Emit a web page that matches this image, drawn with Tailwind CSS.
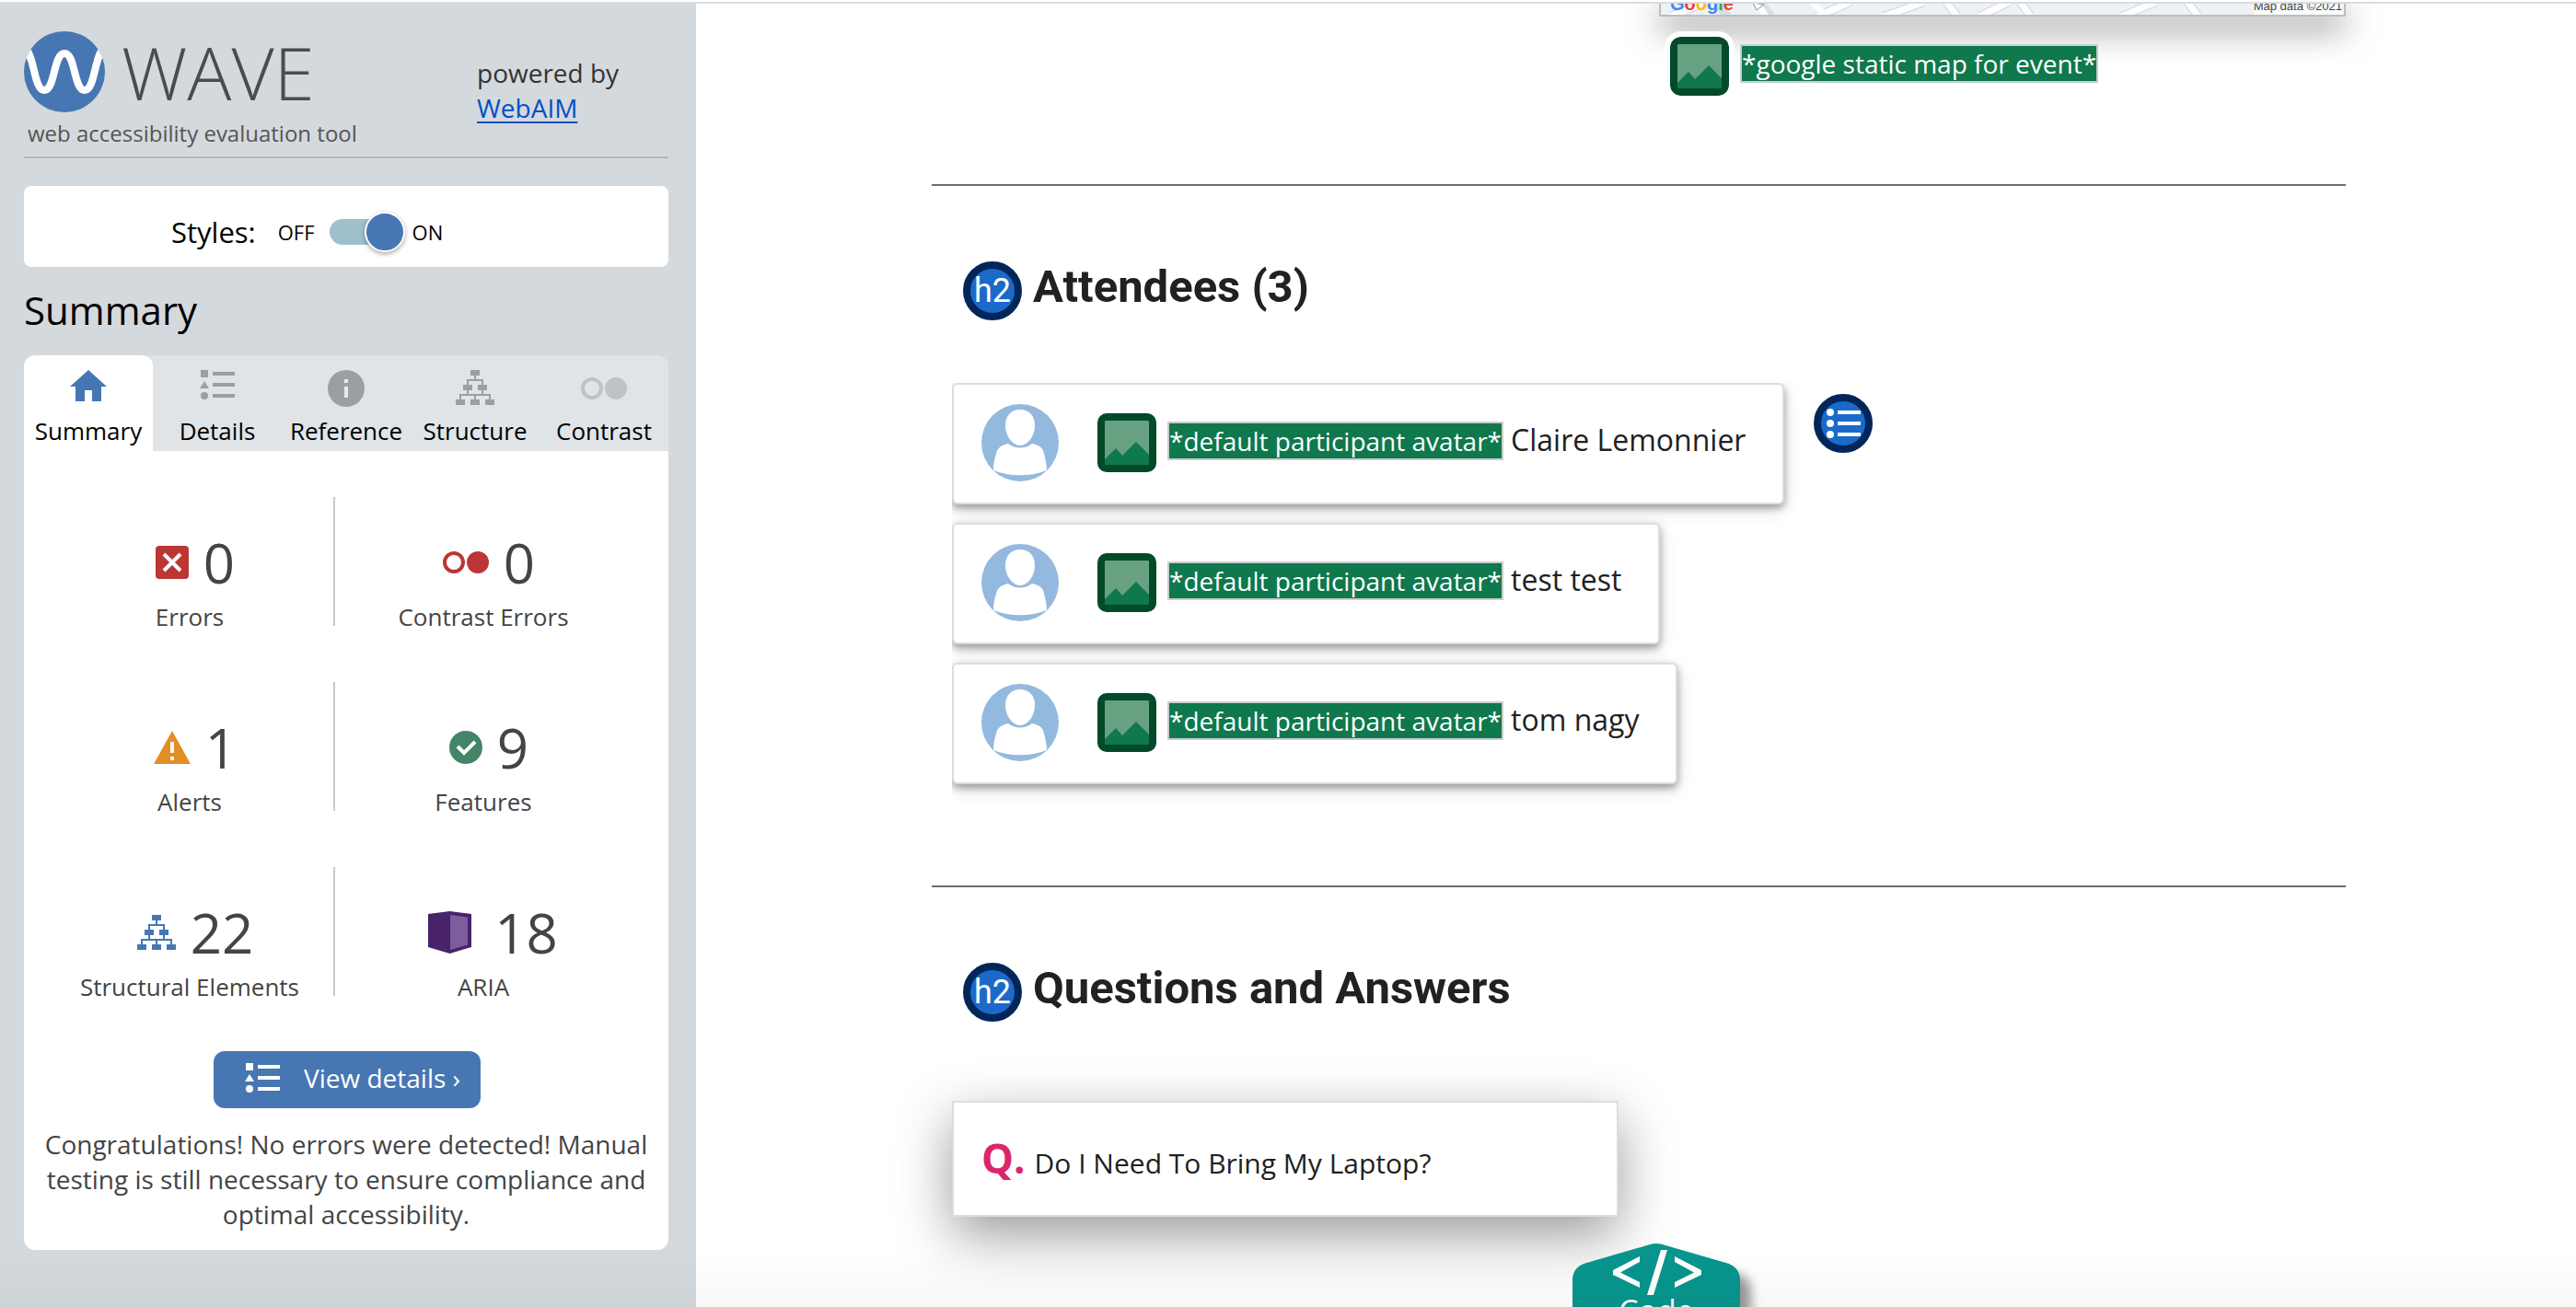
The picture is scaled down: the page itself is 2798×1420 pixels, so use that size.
<!DOCTYPE html>
<html lang="en">
<head>
<meta charset="utf-8">
<title>WAVE Report</title>
<script src="https://cdn.jsdelivr.net/npm/@tailwindcss/browser@4"></script>
</head>
<body class="relative flex h-screen flex-col overflow-hidden bg-white font-['Open_Sans',sans-serif]">
<svg class="hidden">
  <symbol id="structure" viewBox="0 0 42 38">
    <g fill="currentColor"><path d="M16 0h10v6H16zM8 16h10v6H8zM24 16h10v6H24zM0 32h10v6H0zM16 32h10v6H16zM32 32h10v6H32z"/></g>
    <path d="M21 6v5M13 17v-6h16v6M13 22v5M29 22v5M5 33v-6h32v6M21 27v6" fill="none" stroke="currentColor" stroke-width="2"/>
  </symbol>
  <symbol id="details" viewBox="0 0 38 32">
    <path d="M1 0h8v8H1zM5 12l5 8H0zM14 2h24v4H14zM14 14h24v4H14zM14 26h24v4H14z" fill="currentColor"/><circle cx="5" cy="28" r="4" fill="currentColor"/>
  </symbol>
  <symbol id="contrast" viewBox="0 0 50 24">
    <circle cx="12" cy="12" r="10" fill="none" stroke="currentColor" stroke-width="4"/><circle cx="38" cy="12" r="12" fill="currentColor"/>
  </symbol>
  <symbol id="alt" viewBox="0 0 64 64">
    <rect width="64" height="64" rx="10" fill="#024a2a"/><rect x="8" y="8" width="48" height="48" rx="1" fill="#67a182"/>
    <path d="M8 50l12-12 7 8 15-15 14 14v10q0 1-1 1H9q-1 0-1-1z" fill="#0f784c"/>
  </symbol>
  <symbol id="avatar" viewBox="0 0 84 84">
    <circle cx="42" cy="42" r="42" fill="#94b9de"/>
    <path d="M42 6c10 0 16 7 16 17 0 12-8 22-16 22S26 35 26 23C26 13 32 6 42 6z" fill="#fff"/>
    <path d="M29 43c8 6 18 6 26 0 9 2 12 5 13 11 2 8 3 13 3 18-17 7-41 7-58 0 0-6 1-12 3-18 1-6 5-9 13-11z" fill="#fff"/>
  </symbol>
  <symbol id="list" viewBox="0 0 64 64">
    <circle cx="32" cy="32" r="28" fill="#1b6ac9" stroke="#02265a" stroke-width="8"/>
    <g fill="#fff"><circle cx="18" cy="20" r="4"/><circle cx="18" cy="32" r="4"/><circle cx="18" cy="44" r="4"/><path d="M26 18h25v4H26zM26 30h25v4H26zM26 42h25v4H26z"/></g>
  </symbol>
</svg>

<div class="h-1 shrink-0 border-b-2 border-[#d7dce2] bg-white"></div>

<div class="flex min-h-0 flex-1">
  <aside class="w-[756px] shrink-0 bg-[#d4d9dd] pt-[30px] pr-[30px] pl-[26px]">
    <header class="flex items-start border-b-2 border-[#b2b8bc] pb-[9px]">
      <div class="w-[492px]">
        <div class="flex items-center gap-[18px]">
          <svg class="size-22 shrink-0" viewBox="0 0 88 88"><defs><clipPath id="disc"><circle cx="44" cy="44" r="44"/></clipPath></defs>
            <circle cx="44" cy="44" r="44" fill="#4777b3"/>
            <path clip-path="url(#disc)" d="M-1 17C12 22 10 64 22 64S32 24 44 24 54 64 66 64 76 22 89 17" fill="none" stroke="#fff" stroke-width="8"/></svg>
          <span class="text-[80px] leading-[88px] font-light text-[#4c4c4c]">WAVE</span>
        </div>
        <p class="mt-[7px] pl-1 text-[24px] leading-8 text-[#555]">web accessibility evaluation tool</p>
      </div>
      <p class="mt-[26px] text-[28px] leading-[38px] text-[#333]">powered by<br><a href="#" class="text-[#0050c8] underline decoration-2 underline-offset-4">WebAIM</a></p>
    </header>

    <div class="mt-[30px] flex h-[88px] items-center rounded-lg bg-white pt-3 pl-[160px] text-black">
      <label for="styles" class="text-[31px]">Styles:</label>
      <span class="ml-6 text-[22px]">OFF</span>
      <input id="styles" type="checkbox" checked class="mx-4 flex h-7 w-20 appearance-none items-center justify-end rounded-full bg-[#a0c1cb] before:-mr-0.5 before:size-11 before:rounded-full before:border-2 before:border-white before:bg-[#4777b3] before:shadow-[0_2px_5px_rgba(0,0,0,0.35)]">
      <span class="-ml-1.5 text-[22px]">ON</span>
    </div>

    <h2 class="mt-[19px] text-[42px] leading-[56px] text-black">Summary</h2>

    <nav class="mt-[21px] grid grid-cols-5 overflow-hidden rounded-t-xl bg-[#e0e4e7] text-[26px] leading-9 text-black">
      <button class="flex h-[104px] flex-col items-center gap-2 rounded-t-xl bg-white pt-4">
        <svg class="h-10 w-10" viewBox="0 0 40 40"><path d="M20 0l20 18h-6v16H24V22h-8v12H6V18H0z" fill="#4777b3"/></svg>Summary</button>
      <button class="flex h-[104px] flex-col items-center gap-2 pt-4">
        <span class="h-10"><svg class="h-8 w-[38px] text-[#9c9fa1]"><use href="#details"/></svg></span>Details</button>
      <button class="flex h-[104px] flex-col items-center gap-2 pt-4">
        <svg class="h-10 w-10" viewBox="0 0 40 40"><circle cx="20" cy="20" r="20" fill="#9c9fa1"/><path d="M18 10h4v4h-4zM18 18h4v12h-4z" fill="#e8ebed"/></svg>Reference</button>
      <button class="flex h-[104px] flex-col items-center gap-2 pt-4">
        <span class="h-10"><svg class="h-[38px] w-[42px] text-[#9c9fa1]"><use href="#structure"/></svg></span>Structure</button>
      <button class="flex h-[104px] flex-col items-center gap-2 pt-4">
        <span class="flex h-10 items-center"><svg class="h-6 w-[50px] text-[#bfc3c5]"><use href="#contrast"/></svg></span>Contrast</button>
    </nav>

    <section class="flex flex-col items-center rounded-b-xl bg-white pt-[50px] pb-5 text-[#444]">
      <div class="grid w-full grid-cols-[314px_322px] gap-y-[61px] pl-6 text-center text-[26px] leading-9">
        <div class="h-[140px] border-r-2 border-[#c8c8c8] pt-[30px]">
          <div class="flex items-center justify-center gap-4 pl-3 text-[60px] leading-[82px]">
            <svg class="size-9" viewBox="0 0 36 36"><rect width="36" height="36" rx="4" fill="#bb3634"/><path d="M9 9l18 18M27 9L9 27" stroke="#fff" stroke-width="4"/></svg>0</div>
          <div>Errors</div>
        </div>
        <div class="h-[140px] pt-[30px]">
          <div class="flex items-center justify-center gap-4 pl-3 text-[60px] leading-[82px]"><svg class="h-6 w-[50px] text-[#bb3634]"><use href="#contrast"/></svg>0</div>
          <div>Contrast Errors</div>
        </div>
        <div class="h-[140px] border-r-2 border-[#c8c8c8] pt-[30px]">
          <div class="flex items-center justify-center gap-4 pl-3 text-[60px] leading-[82px]">
            <svg class="h-9 w-10" viewBox="0 0 40 36"><path d="M20 0l20 36H0z" fill="#e48e26"/><path d="M18 12h4v12h-4zM18 28h4v4h-4z" fill="#fff"/></svg>1</div>
          <div>Alerts</div>
        </div>
        <div class="h-[140px] pt-[30px]">
          <div class="flex items-center justify-center gap-4 pl-3 text-[60px] leading-[82px]">
            <svg class="size-9" viewBox="0 0 36 36"><circle cx="18" cy="18" r="18" fill="#458567"/><path d="M9 17l7 7 12-12" fill="none" stroke="#fff" stroke-width="4"/></svg>9</div>
          <div>Features</div>
        </div>
        <div class="h-[140px] border-r-2 border-[#c8c8c8] pt-[30px]">
          <div class="flex items-center justify-center gap-4 pl-3 text-[60px] leading-[82px]"><svg class="h-[38px] w-[42px] text-[#4777b3]"><use href="#structure"/></svg>22</div>
          <div>Structural Elements</div>
        </div>
        <div class="h-[140px] pt-[30px]">
          <div class="flex items-center justify-center gap-4 pl-3 text-[60px] leading-[82px]">
            <svg class="h-[46px] w-[65px]" viewBox="0 0 65 46"><path d="M9 3l23.500-3L56 3v36l-23.500 7L9 39z" fill="#48236a"/><path d="M33 4l19 2.500v30L33 42z" fill="#7f5c9b"/></svg>18</div>
          <div>ARIA</div>
        </div>
      </div>
      <div class="mt-[60px] pl-0.5">
        <button class="flex h-[62px] w-[290px] items-center justify-center gap-[26px] rounded-xl bg-[#4777b3] pb-1 pl-3 text-[28px] leading-[38px] text-white">
          <svg class="h-8 w-[38px]"><use href="#details"/></svg>View details ›</button>
      </div>
      <p class="mt-5 px-4 text-center text-[28px] leading-[38px]">Congratulations! No errors were detected! Manual testing is still necessary to ensure compliance and optimal accessibility.</p>
    </section>
  </aside>

  <main class="min-w-0 flex-1 overflow-hidden pr-[250px] pl-64 text-[#212121]">
    <div class="ml-auto w-[746px]">
      <div class="relative h-3.5 border-x-2 border-b-2 border-[#bdbdbd] bg-[#eef2f4] shadow-[0_12px_36px_rgba(0,0,0,0.6)]">
        <div class="relative flex h-3 items-end justify-between overflow-hidden pr-0.5 pl-2.5 font-['Liberation_Sans',sans-serif]">
          <svg class="absolute inset-0 h-3 w-full" viewBox="0 0 742 12" preserveAspectRatio="none"><path d="M10 14L50-2M72 14L62-2M106-2l14 16M170 14L206-2M242 14L286-2M322 14L310-2M346 14L378-2M402 14L390-2M500 14L538-2M584 14L572-2" stroke="#d9dee2" stroke-width="10"/><path d="M10 14L50-2M114 14L104-2M165-2l14 16M170 14L206-2M242 14L286-2M322 14L310-2M346 14L378-2M402 14L390-2M500 14L538-2M584 14L572-2" stroke="#fff" stroke-width="7"/><path d="M100-1l4 8 8-6z" fill="#fff" stroke="#8a8a8a"/></svg>
          <span class="relative pb-1 text-[20px] leading-4 font-bold"><span class="text-[#4285f4]">G</span><span class="text-[#ea4335]">o</span><span class="text-[#fbbc05]">o</span><span class="text-[#4285f4]">g</span><span class="text-[#34a853]">l</span><span class="text-[#ea4335]">e</span></span>
          <span class="relative bg-white/70 text-[13px] leading-[18px] text-[#444]">Map data ©2021</span>
        </div>
      </div>
      <div class="relative mt-[22px] flex h-16 items-start gap-3 pl-3">
        <svg class="size-16 rounded-xl bg-white ring-6 ring-white"><use href="#alt"/></svg>
        <span class="mt-2 border-2 border-[#ccc] bg-[#0f784c] text-[28px] leading-[38px] text-white">*google static map for event*</span>
      </div>
    </div>

    <hr class="mt-24 border-t-2 border-[#6e6e6e]">

    <section>
      <h2 class="mt-[82px] flex h-16 items-center gap-3 pl-[34px] font-['Roboto',sans-serif] text-[49px] leading-[56px] font-bold">
        <span class="flex size-16 items-center justify-center rounded-full border-8 border-[#02265a] bg-[#1b6ac9] text-[36px] font-normal text-white">h2</span>
        <span class="pb-2">Attendees (3)</span></h2>
      <div class="relative mt-[68px] pl-[22px]">
        <div class="flex items-start">
          <ul class="flex flex-col items-start gap-5 overflow-hidden pr-8 pb-5 text-[32px]">
            <li class="flex h-[132px] items-center rounded-md border-2 border-[#ddd] bg-white pr-10 pb-0.5 pl-[30px] shadow-[0_4px_8px_rgba(0,0,0,0.35),0_6px_20px_rgba(0,0,0,0.12)]">
              <svg class="size-[84px]"><use href="#avatar"/></svg><svg class="ml-[42px] size-16"><use href="#alt"/></svg>
              <span class="ml-3 flex items-baseline gap-2 pb-1.5"><span class="border-2 border-[#ccc] bg-[#0f784c] text-[28px] leading-[38px] text-white">*default participant avatar*</span>Claire Lemonnier</span></li>
            <li class="flex h-[132px] items-center rounded-md border-2 border-[#ddd] bg-white pr-10 pb-0.5 pl-[30px] shadow-[0_4px_8px_rgba(0,0,0,0.35),0_6px_20px_rgba(0,0,0,0.12)]">
              <svg class="size-[84px]"><use href="#avatar"/></svg><svg class="ml-[42px] size-16"><use href="#alt"/></svg>
              <span class="ml-3 flex items-baseline gap-2 pb-1.5"><span class="border-2 border-[#ccc] bg-[#0f784c] text-[28px] leading-[38px] text-white">*default participant avatar*</span>test test</span></li>
            <li class="flex h-[132px] items-center rounded-md border-2 border-[#ddd] bg-white pr-10 pb-0.5 pl-[30px] shadow-[0_4px_8px_rgba(0,0,0,0.35),0_6px_20px_rgba(0,0,0,0.12)]">
              <svg class="size-[84px]"><use href="#avatar"/></svg><svg class="ml-[42px] size-16"><use href="#alt"/></svg>
              <span class="ml-3 flex items-baseline gap-2 pb-1.5"><span class="border-2 border-[#ccc] bg-[#0f784c] text-[28px] leading-[38px] text-white">*default participant avatar*</span>tom nagy</span></li>
          </ul>
          <svg class="mt-3 size-16"><use href="#list"/></svg>
        </div>
      </div>
    </section>

    <hr class="mt-[90px] border-t-2 border-[#6e6e6e]">

    <section>
      <h2 class="mt-[82px] flex h-16 items-center gap-3 pl-[34px] font-['Roboto',sans-serif] text-[49px] leading-[56px] font-bold">
        <span class="flex size-16 items-center justify-center rounded-full border-8 border-[#02265a] bg-[#1b6ac9] text-[36px] font-normal text-white">h2</span>
        <span class="pb-2">Questions and Answers</span></h2>
      <div class="mt-[86px] ml-[22px] flex h-[126px] w-[724px] items-baseline border-2 border-[#ddd] bg-white pt-8 pl-[30px] text-[30px] shadow-[0_20px_60px_rgba(0,0,0,0.4)]">
        <span class="text-[44px] leading-[56px] font-bold text-[#d92769]">Q.</span><span class="ml-2.5">Do I Need To Bring My Laptop?</span>
      </div>
      <button class="relative mt-[29px] ml-[696px] block h-[200px] w-[182px] text-white">
        <svg class="absolute inset-0 h-full w-full overflow-visible drop-shadow-[12px_12px_6px_rgba(0,0,0,0.4)]" viewBox="0 0 182 200"><path d="M81 2q10-4 20 0l69 20q12 5 12 18v160H0V40q0-13 12-18z" fill="#07958d"/></svg>
        <svg class="absolute top-0 left-0 h-16 w-[182px]" viewBox="0 0 182 64"><path d="M73 14v6L52 31.500 73 42v6L44 34v-5zM111 14v6l21 11.500L111 42v6l29-14v-5zM96 7h7L88 56h-7z" fill="#fff"/></svg>
        <span class="absolute inset-x-0 top-[50px] text-center text-[34px] leading-[46px]">Code</span>
      </button>
    </section>
  </main>
</div>
<div class="pointer-events-none absolute inset-x-0 bottom-0 h-16 bg-linear-to-b from-transparent to-black/3"></div>
</body>
</html>
